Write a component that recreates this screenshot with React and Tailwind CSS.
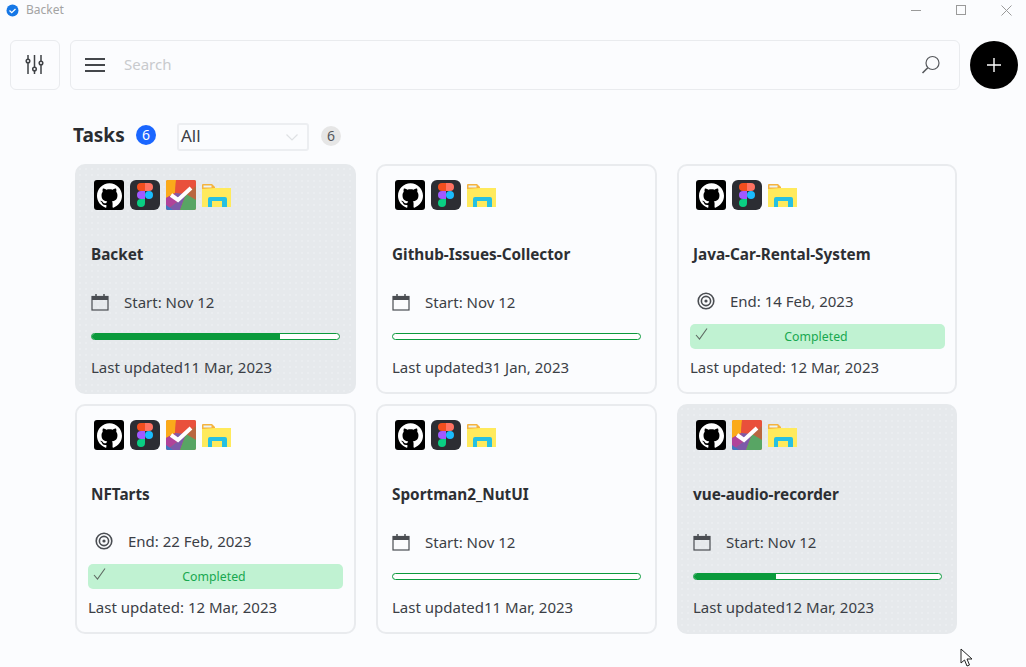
import { SiGithub } from "react-icons/si";

const tasks = [
  { name: "Backet", active: true, progress: 76, updated: "Last updated11 Mar, 2023", icons: ["github", "figma", "tick", "folder"] },
  { name: "Github-Issues-Collector", progress: 0, updated: "Last updated31 Jan, 2023", icons: ["github", "figma", "folder"] },
  { name: "Java-Car-Rental-System", end: "End: 14 Feb, 2023", updated: "Last updated: 12 Mar, 2023", icons: ["github", "figma", "folder"] },
  { name: "NFTarts", end: "End: 22 Feb, 2023", updated: "Last updated: 12 Mar, 2023", icons: ["github", "figma", "tick", "folder"] },
  { name: "Sportman2_NutUI", progress: 0, updated: "Last updated11 Mar, 2023", icons: ["github", "figma", "folder"] },
  { name: "vue-audio-recorder", active: true, progress: 33, updated: "Last updated12 Mar, 2023", icons: ["github", "tick", "folder"] },
];

const GithubIcon = () => (
  <div className="w-[30px] h-[30px] bg-black rounded-[3px] flex items-center justify-center">
    <SiGithub className="w-[25px] h-[25px] text-white" />
  </div>
);

const FigmaIcon = () => (
  <div className="w-[30px] h-[30px] bg-[#2c2d33] rounded-md flex items-center justify-center">
    <svg width="16" height="24" viewBox="0 0 16 24">
      <path d="M8 0H4a4 4 0 0 0 0 8h4z" fill="#f24e1e" />
      <path d="M8 0h4a4 4 0 0 1 0 8H8z" fill="#ff7262" />
      <path d="M8 8H4a4 4 0 0 0 0 8h4z" fill="#a259ff" />
      <circle cx="12" cy="12" r="4" fill="#1abcfe" />
      <path d="M4 16h4v4a4 4 0 1 1-4-4z" fill="#0acf83" />
    </svg>
  </div>
);

const TickIcon = () => (
  <svg width="30" height="30" viewBox="0 0 30 30" className="rounded-[2px]">
    <rect width="30" height="30" fill="#d9683f" />
    <polygon points="0,0 10,0 9,13 0,18" fill="#fbaa1a" />
    <polygon points="10,0 30,0 30,6 20,14 9,13" fill="#e9503b" />
    <polygon points="30,6 30,20 23,18 20,14" fill="#b9663f" />
    <polygon points="0,18 9,13 11,22 0,30" fill="#b0439a" />
    <polygon points="9,13 20,14 14,30 0,30 11,22" fill="#7d5aa9" />
    <polygon points="20,14 30,20 30,30 14,30" fill="#58a564" />
    <polygon points="0,25 7,30 0,30" fill="#3f78c0" />
    <path d="M5 15l7 5L25 8" fill="none" stroke="#fff" strokeWidth="4" />
  </svg>
);

const FolderIcon = () => (
  <svg width="30" height="30" viewBox="0 0 30 30">
    <path d="M0 5a1 1 0 0 1 1-1h9l3 3v2H0z" fill="#f5b33d" />
    <rect x="1.5" y="5.5" width="8" height="2" fill="#e9f4f8" />
    <path d="M0 9l13-1h16v19H0z" fill="#ffea5c" />
    <path d="M6 27v-8a2 2 0 0 1 2-2h15a2 2 0 0 1 2 2v8h-5v-6H10v6z" fill="#26c0e2" />
  </svg>
);

const appIcons = { github: GithubIcon, figma: FigmaIcon, tick: TickIcon, folder: FolderIcon };

const CalendarIcon = () => (
  <svg width="18" height="18" viewBox="0 0 18 18" className="text-[#4a4d52] -mt-px">
    <rect x="1" y="3.5" width="16" height="13.5" fill="none" stroke="currentColor" strokeWidth="1.2" />
    <rect x="1" y="3.5" width="16" height="3.5" fill="currentColor" />
    <path d="M5 1v4M13 1v4" stroke="currentColor" strokeWidth="1.5" />
  </svg>
);

const TargetIcon = () => (
  <svg width="18" height="18" viewBox="0 0 18 18" className="text-[#4a4d52]">
    <circle cx="9" cy="9" r="7.8" fill="none" stroke="currentColor" strokeWidth="1.6" />
    <circle cx="9" cy="9" r="4.6" fill="none" stroke="currentColor" strokeWidth="1.6" />
    <circle cx="9" cy="9" r="1.6" fill="currentColor" />
  </svg>
);

const TaskCard = ({ task }) => (
  <div
    className={`h-[230px] rounded-[10px] border-2 ${
      task.active
        ? "bg-[#e6e9ec] border-[#e6e9ec] bg-[radial-gradient(#ebeef0_0.7px,transparent_0.8px)] bg-[length:6px_6px]"
        : "bg-[#fbfcfe] border-[#e9ebee]"
    }`}
  >
    <div className="flex gap-[6px] pl-[17px] pt-[14px]">
      {task.icons.map((icon) => {
        const Icon = appIcons[icon];
        return <Icon key={icon} />;
      })}
    </div>
    <h3 className="mt-[34px] pl-[14px] text-[15.3px] leading-5 font-bold text-[#2d2f33]">{task.name}</h3>
    {task.end ? (
      <>
        <div className="mt-[25px] h-6 pl-[18px] flex items-center text-[15px] text-[#3b3f46]">
          <TargetIcon />
          <span className="ml-[15px]">{task.end}</span>
        </div>
        <div className="relative mt-[11px] ml-[11px] w-[255px] h-[25px] rounded-[5px] bg-[#c0f2d2] flex items-center justify-center pt-px pr-[3px] text-[12.3px] text-[#18a84f]">
          <svg width="14" height="14" viewBox="0 0 14 14" className="absolute left-[5px] top-[3px]">
            <path d="M1 8l3.5 4L12 1.5" fill="none" stroke="#5f6b64" strokeWidth="1.1" />
          </svg>
          Completed
        </div>
        <p className="mt-[6px] pl-[11px] text-[15px] leading-6 text-[#3b3f46]">{task.updated}</p>
      </>
    ) : (
      <>
        <div className="mt-[26px] h-6 pl-[14px] flex items-center text-[15px] text-[#3b3f46]">
          <CalendarIcon />
          <span className="ml-[15px]">Start: Nov 12</span>
        </div>
        <div className="mt-[19px] ml-[14px] w-[249px] h-[7px] rounded-full border border-[#0b9a3c] bg-white overflow-hidden">
          <div className="h-full bg-[#0b9a3c]" style={{ width: `${task.progress}%` }} />
        </div>
        <p className="mt-[15px] pl-[14px] text-[15px] leading-6 text-[#3b3f46]">{task.updated}</p>
      </>
    )}
  </div>
);

export default function App() {
  return (
    <div className="relative w-[1026px] h-[667px] overflow-hidden bg-[#fbfcfe] font-['Noto_Sans',sans-serif]">
      {/* Title bar */}
      <div className="h-5 flex items-center justify-between">
        <div className="flex items-center pl-[6px]">
          <svg width="13" height="13" viewBox="0 0 13 13">
            <circle cx="6.5" cy="6.5" r="6" fill="#1577e6" />
            <path d="M3.5 6.5l2.2 2.2 3.8-3.7" fill="none" stroke="#fff" strokeWidth="1.3" />
          </svg>
          <span className="ml-[7px] text-xs text-[#a3a3a3]">Backet</span>
        </div>
        <div className="flex items-center gap-[35px] pr-[14px]">
          <div className="w-[10px] h-px bg-[#9a9a9a]" />
          <div className="w-[10px] h-[10px] border border-[#9a9a9a]" />
          <svg width="11" height="11" viewBox="0 0 11 11">
            <path d="M.5.5l10 10M10.5.5l-10 10" stroke="#9a9a9a" strokeWidth="1" />
          </svg>
        </div>
      </div>

      {/* Toolbar */}
      <div className="mt-5 pl-[10px] flex items-center">
        <div className="w-[50px] h-[50px] rounded-md border border-[#e9ebee] flex items-center justify-center">
          <svg width="20" height="20" viewBox="0 0 20 20" fill="none" stroke="#3f4246" strokeWidth="1.5" className="-mt-[2px]">
            <path d="M3 1v19M9.5 1v19M16 1v19" />
            <circle cx="3" cy="7" r="1.8" fill="#fbfcfe" />
            <circle cx="9.5" cy="15" r="1.8" fill="#fbfcfe" />
            <circle cx="16" cy="9" r="1.8" fill="#fbfcfe" />
          </svg>
        </div>
        <div className="ml-[10px] w-[890px] h-[50px] rounded-md border border-[#e9ebee] flex items-center pl-[14px] pr-[18px]">
          <div className="flex flex-col gap-[4px] w-5">
            <div className="h-[2px] bg-[#44474b]" />
            <div className="h-[2px] bg-[#44474b]" />
            <div className="h-[2px] bg-[#44474b]" />
          </div>
          <span className="ml-[19px] pb-[2px] text-[15px] text-[#c8cacd]">Search</span>
          <svg width="20" height="20" viewBox="0 0 20 20" fill="none" stroke="#55585c" strokeWidth="1.2" className="ml-auto">
            <circle cx="11.5" cy="8" r="6.5" />
            <path d="M6.8 12.7L1.5 18" strokeWidth="1.6" />
          </svg>
        </div>
        <div className="ml-[10px] w-12 h-12 rounded-full bg-black flex items-center justify-center">
          <svg width="14" height="14" viewBox="0 0 14 14">
            <path d="M7 0v14M0 7h14" stroke="#fff" strokeWidth="1.4" />
          </svg>
        </div>
      </div>

      {/* Heading */}
      <div className="mt-[33px] pl-[73px] h-7 flex items-center">
        <div className="flex items-center mb-1">
          <h1 className="w-[51px] text-[19px] font-bold text-[#2a2c30] whitespace-nowrap">Tasks</h1>
          <span className="ml-3 w-5 h-5 rounded-full bg-[#1a66ff] text-white text-sm flex items-center justify-center">6</span>
        </div>
        <div className="ml-[21px] w-[132px] h-7 rounded-[3px] border-2 border-[#eceef1] flex items-center justify-between pl-[2px] pr-[9px] pb-[2px] text-[17px] text-[#3b3f46]">
          All
          <svg width="12" height="7" viewBox="0 0 12 7" className="mt-[2px]">
            <path d="M.5.5L6 6 11.5.5" fill="none" stroke="#dfe1e4" strokeWidth="1.2" />
          </svg>
        </div>
        <span className="ml-3 mb-[3px] w-5 h-5 rounded-full bg-[#e6e6e6] text-[#55585c] text-sm flex items-center justify-center">6</span>
      </div>

      {/* Cards */}
      <div className="mt-[13px] ml-[75px] grid grid-cols-[281px_281px_280px] gap-x-5 gap-y-[10px]">
        {tasks.map((task) => (
          <TaskCard key={task.name} task={task} />
        ))}
      </div>

      {/* Mouse pointer */}
      <svg width="14" height="20" viewBox="0 0 14 20" className="absolute left-[960px] top-[648px]">
        <path d="M1 1v14l3.5-3 2.5 6 2.5-1-2.5-6h5z" fill="#fff" stroke="#222" strokeWidth="1" />
      </svg>
    </div>
  );
}
